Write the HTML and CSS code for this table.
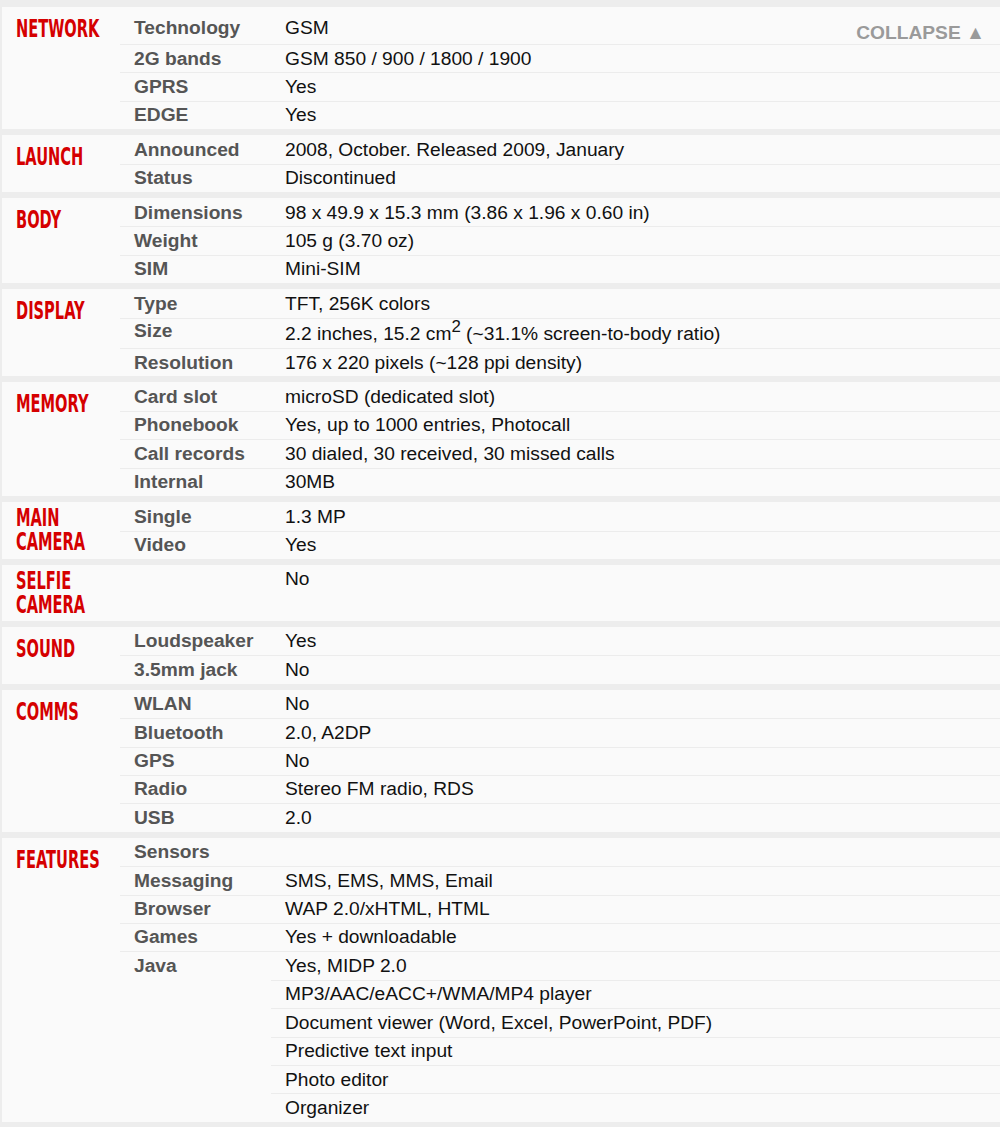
FILE: index.html
```html
<!DOCTYPE html>
<html>
<head>
<meta charset="utf-8">
<link rel="stylesheet" href="styles.css">
</head>
<body>
<div class="specs">
  <div class="group first">
    <div class="head"><span>NETWORK</span></div>
    <div class="rows">
      <div class="row"><div class="ttl">Technology</div><div class="nfo"><span class="collapse">COLLAPSE ▲</span>GSM</div></div>
      <div class="row"><div class="ttl">2G bands</div><div class="nfo">GSM 850 / 900 / 1800 / 1900</div></div>
      <div class="row"><div class="ttl">GPRS</div><div class="nfo">Yes</div></div>
      <div class="row"><div class="ttl">EDGE</div><div class="nfo">Yes</div></div>
    </div>
  </div>
  <div class="group">
    <div class="head"><span>LAUNCH</span></div>
    <div class="rows">
      <div class="row"><div class="ttl">Announced</div><div class="nfo">2008, October. Released 2009, January</div></div>
      <div class="row"><div class="ttl">Status</div><div class="nfo">Discontinued</div></div>
    </div>
  </div>
  <div class="group">
    <div class="head"><span>BODY</span></div>
    <div class="rows">
      <div class="row"><div class="ttl">Dimensions</div><div class="nfo">98 x 49.9 x 15.3 mm (3.86 x 1.96 x 0.60 in)</div></div>
      <div class="row"><div class="ttl">Weight</div><div class="nfo">105 g (3.70 oz)</div></div>
      <div class="row"><div class="ttl">SIM</div><div class="nfo">Mini-SIM</div></div>
    </div>
  </div>
  <div class="group">
    <div class="head"><span>DISPLAY</span></div>
    <div class="rows">
      <div class="row"><div class="ttl">Type</div><div class="nfo">TFT, 256K colors</div></div>
      <div class="row size"><div class="ttl">Size</div><div class="nfo">2.2 inches, 15.2 cm<sup>2</sup> (~31.1% screen-to-body ratio)</div></div>
      <div class="row"><div class="ttl">Resolution</div><div class="nfo">176 x 220 pixels (~128 ppi density)</div></div>
    </div>
  </div>
  <div class="group">
    <div class="head"><span>MEMORY</span></div>
    <div class="rows">
      <div class="row"><div class="ttl">Card slot</div><div class="nfo">microSD (dedicated slot)</div></div>
      <div class="row"><div class="ttl">Phonebook</div><div class="nfo">Yes, up to 1000 entries, Photocall</div></div>
      <div class="row"><div class="ttl">Call records</div><div class="nfo">30 dialed, 30 received, 30 missed calls</div></div>
      <div class="row"><div class="ttl">Internal</div><div class="nfo">30MB</div></div>
    </div>
  </div>
  <div class="group">
    <div class="head two"><span>MAIN<br>CAMERA</span></div>
    <div class="rows">
      <div class="row"><div class="ttl">Single</div><div class="nfo">1.3 MP</div></div>
      <div class="row"><div class="ttl">Video</div><div class="nfo">Yes</div></div>
    </div>
  </div>
  <div class="group">
    <div class="head two"><span>SELFIE<br>CAMERA</span></div>
    <div class="rows">
      <div class="row"><div class="ttl"></div><div class="nfo">No</div></div>
    </div>
  </div>
  <div class="group">
    <div class="head"><span>SOUND</span></div>
    <div class="rows">
      <div class="row"><div class="ttl">Loudspeaker</div><div class="nfo">Yes</div></div>
      <div class="row"><div class="ttl">3.5mm jack</div><div class="nfo">No</div></div>
    </div>
  </div>
  <div class="group">
    <div class="head"><span>COMMS</span></div>
    <div class="rows">
      <div class="row"><div class="ttl">WLAN</div><div class="nfo">No</div></div>
      <div class="row"><div class="ttl">Bluetooth</div><div class="nfo">2.0, A2DP</div></div>
      <div class="row"><div class="ttl">GPS</div><div class="nfo">No</div></div>
      <div class="row"><div class="ttl">Radio</div><div class="nfo">Stereo FM radio, RDS</div></div>
      <div class="row"><div class="ttl">USB</div><div class="nfo">2.0</div></div>
    </div>
  </div>
  <div class="group">
    <div class="head"><span>FEATURES</span></div>
    <div class="rows">
      <div class="row"><div class="ttl">Sensors</div><div class="nfo"></div></div>
      <div class="row"><div class="ttl">Messaging</div><div class="nfo">SMS, EMS, MMS, Email</div></div>
      <div class="row"><div class="ttl">Browser</div><div class="nfo">WAP 2.0/xHTML, HTML</div></div>
      <div class="row"><div class="ttl">Games</div><div class="nfo">Yes + downloadable</div></div>
      <div class="row"><div class="ttl">Java</div><div class="nfo">Yes, MIDP 2.0</div></div>
      <div class="row extra"><div class="ttl"></div><div class="nfo">MP3/AAC/eACC+/WMA/MP4 player</div></div>
      <div class="row extra"><div class="ttl"></div><div class="nfo">Document viewer (Word, Excel, PowerPoint, PDF)</div></div>
      <div class="row extra"><div class="ttl"></div><div class="nfo">Predictive text input</div></div>
      <div class="row extra"><div class="ttl"></div><div class="nfo">Photo editor</div></div>
      <div class="row extra"><div class="ttl"></div><div class="nfo">Organizer</div></div>
    </div>
  </div>
</div>
</body>
</html>
```

FILE: styles.css
```css
html, body {
  margin: 0;
  padding: 0;
  background: #ededed;
}

.specs {
  padding: 7px 0 8px 2px;
  display: flex;
  flex-direction: column;
  gap: 6px;
  font-family: "Liberation Sans", Arial, sans-serif;
  font-size: 19.2px;
}

.group {
  display: flex;
  background: #fafafa;
}

.head {
  width: 118px;
  flex: none;
  box-sizing: border-box;
  padding: 7px 0 0 14px;
  line-height: 30px;
  color: #d50000;
  font-family: "DejaVu Sans Condensed", "Liberation Sans Narrow", sans-serif;
  font-size: 25px;
  font-weight: bold;
}

.head span {
  display: inline-block;
  transform: scaleX(0.65);
  transform-origin: left center;
  white-space: nowrap;
}

.head.two {
  padding-top: 4px;
  padding-bottom: 4px;
  line-height: 24px;
}

.rows {
  flex: 1;
  display: flex;
  flex-direction: column;
}

.row {
  display: grid;
  grid-template-columns: 151px 1fr;
}

.row + .row {
  box-shadow: inset 0 1px 0 #ececec;
}

.row.extra {
  box-shadow: none;
}

.row.extra .nfo {
  box-shadow: inset 0 1px 0 #ececec;
}

.ttl, .nfo {
  padding: 3.5px 0 2.5px 14px;
  line-height: 22.4px;
}

.row.size .ttl {
  padding-top: 2.5px;
  padding-bottom: 5.5px;
}

.row.size .nfo {
  padding-top: 5.5px;
  padding-bottom: 2.5px;
}

.ttl {
  color: #555;
  font-weight: bold;
}

.nfo {
  color: #111;
}

.first .row:first-child .ttl {
  padding-top: 10px;
  padding-bottom: 4.6px;
}

.first .row:first-child .nfo {
  padding-top: 10px;
  padding-bottom: 0;
}

.collapse {
  float: right;
  margin: 5px 15px 0 0;
  line-height: 22px;
  color: #9a9a9a;
  font-weight: bold;
}

sup {
  font-size: 0.88em;
  line-height: 0;
  vertical-align: 0.5em;
}
```
